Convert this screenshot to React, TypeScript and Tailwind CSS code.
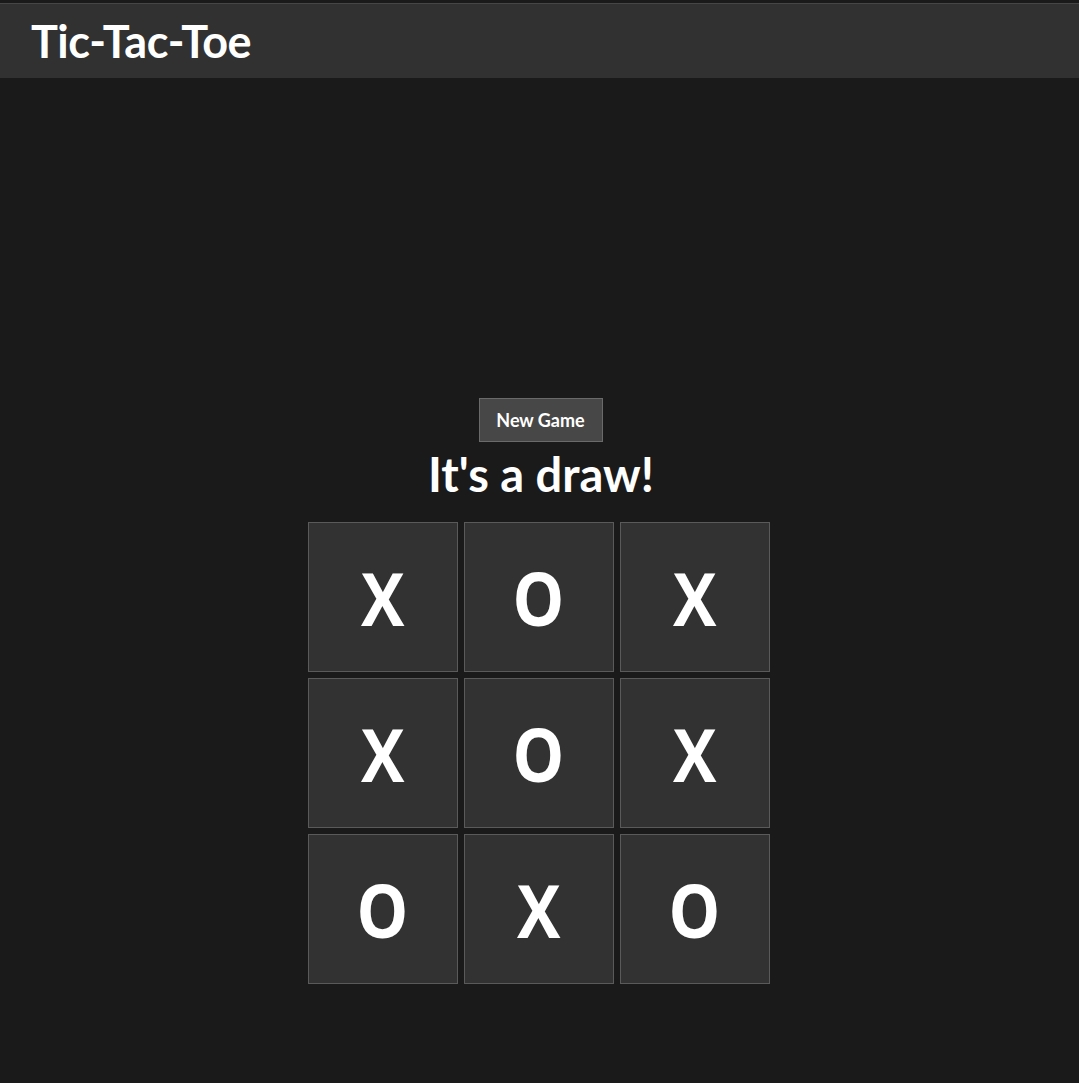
const board = ["X", "O", "X", "X", "O", "X", "O", "X", "O"];

export default function App() {
  return (
    <div className="min-h-[1083px] bg-[#1a1a1a] pt-[3px] text-white" style={{ fontFamily: "Lato, 'Noto Sans', sans-serif" }}>
      <header className="h-[75px] border-t border-[#464646] bg-[#313131] px-[31px] flex items-center">
        <h1 className="text-[45px] font-bold leading-none tracking-[-0.5px]">Tic-Tac-Toe</h1>
      </header>
      <main className="flex flex-col items-center pt-[320px]">
        <button className="ml-[2px] h-[44px] w-[124px] border border-[#6a6a6a] bg-[#474747] text-[18px] font-bold">
          New Game
        </button>
        <h2 className="ml-[3px] mt-[4px] text-[47px] font-bold leading-[56px]">It's a draw!</h2>
        <div className="mt-[20px] -translate-x-[1px] grid grid-cols-[repeat(3,150px)] gap-[6px]">
          {board.map((v, i) => (
            <div
              key={i}
              className="h-[150px] border border-[#5a5a5a] bg-[#323232] flex items-center justify-center font-['Open_Sans',sans-serif] text-[74px] font-bold"
            >
              <span className="inline-block scale-x-[0.88]">{v}</span>
            </div>
          ))}
        </div>
      </main>
    </div>
  );
}
